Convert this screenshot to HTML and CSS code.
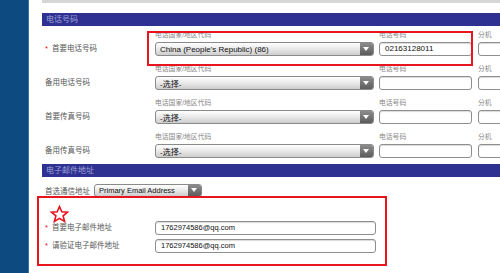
FILE: index.html
```html
<!DOCTYPE html>
<html lang="zh">
<head>
  <meta charset="UTF-8" />
  <title>联系信息</title>
  <link rel="stylesheet" href="styles.css">
</head>
<body>
  <div class="sidebar"></div>

  <div class="main">
    <div class="topbar"></div>

    <div class="section-title">电话号码</div>

    <div class="phone-row">
      <div class="row-label"><span class="req">*</span>首要电话号码</div>
      <div class="field country">
        <div class="sub">电话国家/地区代码</div>
        <div class="select wide"><span>China (People's Republic) (86)</span><i class="arrow"></i></div>
      </div>
      <div class="field number">
        <div class="sub">电话号码</div>
        <div class="input">02163128011</div>
      </div>
      <div class="field ext">
        <div class="sub">分机</div>
        <div class="input"></div>
      </div>
    </div>

    <div class="phone-row">
      <div class="row-label">备用电话号码</div>
      <div class="field country">
        <div class="sub">电话国家/地区代码</div>
        <div class="select wide"><span>-选择-</span><i class="arrow"></i></div>
      </div>
      <div class="field number">
        <div class="sub">电话号码</div>
        <div class="input"></div>
      </div>
      <div class="field ext">
        <div class="sub">分机</div>
        <div class="input"></div>
      </div>
    </div>

    <div class="phone-row">
      <div class="row-label">首要传真号码</div>
      <div class="field country">
        <div class="sub">电话国家/地区代码</div>
        <div class="select wide"><span>-选择-</span><i class="arrow"></i></div>
      </div>
      <div class="field number">
        <div class="sub">电话号码</div>
        <div class="input"></div>
      </div>
      <div class="field ext">
        <div class="sub">分机</div>
        <div class="input"></div>
      </div>
    </div>

    <div class="phone-row last">
      <div class="row-label">备用传真号码</div>
      <div class="field country">
        <div class="sub">电话国家/地区代码</div>
        <div class="select wide"><span>-选择-</span><i class="arrow"></i></div>
      </div>
      <div class="field number">
        <div class="sub">电话号码</div>
        <div class="input"></div>
      </div>
      <div class="field ext">
        <div class="sub">分机</div>
        <div class="input"></div>
      </div>
    </div>

    <div class="section-title">电子邮件地址</div>

    <div class="pref-row">
      <span class="pref-label">首选通信地址</span>
      <div class="select pref"><span>Primary Email Address</span><i class="arrow"></i></div>
    </div>

    <div class="email-block">
      <svg class="star" width="19" height="18" viewBox="0 0 19 18">
        <polygon points="9.5,1.5 11.8,6.8 17.5,7.1 13.1,10.8 14.6,16.5 9.5,13.4 4.4,16.5 5.9,10.8 1.5,7.1 7.2,6.8"
          fill="none" stroke="#e8141e" stroke-width="1.6" stroke-linejoin="miter"/>
      </svg>
      <div class="email-row">
        <div class="row-label"><span class="req">*</span>首要电子邮件地址</div>
        <div class="input email">1762974586@qq.com</div>
      </div>
      <div class="email-row">
        <div class="row-label"><span class="req">*</span>请验证电子邮件地址</div>
        <div class="input email">1762974586@qq.com</div>
      </div>
    </div>

    <div class="mark mark-phone"></div>
    <div class="mark mark-email"></div>
  </div>
</body>
</html>
```

FILE: styles.css
```css
body {
  margin: 0;
  display: flex;
  height: 273px;
  overflow: hidden;
  font-family: "Liberation Sans", "Noto Sans CJK SC", sans-serif;
  background-color: white;
}
.sidebar {
  width: 28px;
  flex-shrink: 0;
  background-color: #0c4a80;
  border-right: 1px solid #3e6e9c;
}
.main {
  position: relative;
  flex: 1;
  min-width: 0;
  padding-left: 13px;
  overflow: hidden;
}
.topbar {
  height: 3px;
  background-color: #d6d6d6;
  margin-bottom: 10px;
}
.section-title {
  height: 13px;
  line-height: 13px;
  background-color: #2e3191;
  color: #9ea3d6;
  font-size: 8px;
  padding-left: 4px;
  margin-bottom: 4px;
}
.phone-row {
  display: flex;
  align-items: flex-end;
  height: 26px;
  margin-bottom: 8px;
}
.phone-row.last {
  margin-bottom: 6px;
}
.row-label {
  width: 110px;
  flex-shrink: 0;
  padding-left: 3px;
  font-size: 7.5px;
  color: #555;
  line-height: 12px;
  margin-bottom: 1px;
  white-space: nowrap;
}
.req {
  color: #e8141e;
  margin-right: 4px;
}
.sub {
  font-size: 6.8px;
  color: #888;
  height: 12px;
  line-height: 10px;
  white-space: nowrap;
}
.country {
  width: 224px;
  flex-shrink: 0;
}
.number {
  width: 99px;
  flex-shrink: 0;
}
.ext {
  flex-shrink: 0;
}
.select {
  display: flex;
  align-items: center;
  height: 12px;
  border: 1px solid #8a8a8a;
  border-radius: 3px;
  background: linear-gradient(#ffffff, #e6e6e6 55%, #cdcdcd);
  font-size: 8px;
  color: #111;
  overflow: hidden;
}
.select span {
  flex: 1;
  padding-left: 4px;
  white-space: nowrap;
}
.select.wide {
  width: 217px;
}
.arrow {
  width: 13px;
  height: 12px;
  background: linear-gradient(#8c8c8c, #5c5c5c);
  position: relative;
}
.arrow::after {
  content: "";
  position: absolute;
  left: 3px;
  top: 4px;
  border-left: 3.5px solid transparent;
  border-right: 3.5px solid transparent;
  border-top: 4.5px solid #fff;
}
.input {
  height: 12px;
  line-height: 12px;
  border: 1px solid #8e8e8e;
  border-radius: 3px;
  box-shadow: inset 0 1px 1px rgba(0,0,0,0.15);
  font-size: 8px;
  color: #111;
  padding-left: 5px;
  width: 86px;
}
.ext .input {
  width: 40px;
}
.pref-row {
  display: flex;
  align-items: center;
  margin-top: 7px;
  padding-left: 3px;
}
.pref-label {
  font-size: 7.5px;
  color: #555;
  margin-right: 4px;
}
.select.pref {
  width: 106px;
  height: 11px;
  font-size: 7.5px;
}
.select.pref .arrow {
  height: 11px;
}
.select.pref .arrow::after {
  top: 3px;
}
.email-block {
  margin-top: 8px;
  padding-left: 8px;
}
.star {
  display: block;
  margin-bottom: -2px;
}
.email-row {
  display: flex;
  align-items: center;
  margin-left: -8px;
  margin-bottom: 4px;
}
.email-row .row-label {
  margin-bottom: 0;
}
.input.email {
  width: 214px;
  font-size: 7.5px;
}
.mark {
  position: absolute;
  border: 2px solid #e8141e;
}
.mark-phone {
  left: 118px;
  top: 31px;
  width: 322px;
  height: 31px;
}
.mark-email {
  left: 8px;
  top: 196px;
  width: 346px;
  height: 66px;
}
```
